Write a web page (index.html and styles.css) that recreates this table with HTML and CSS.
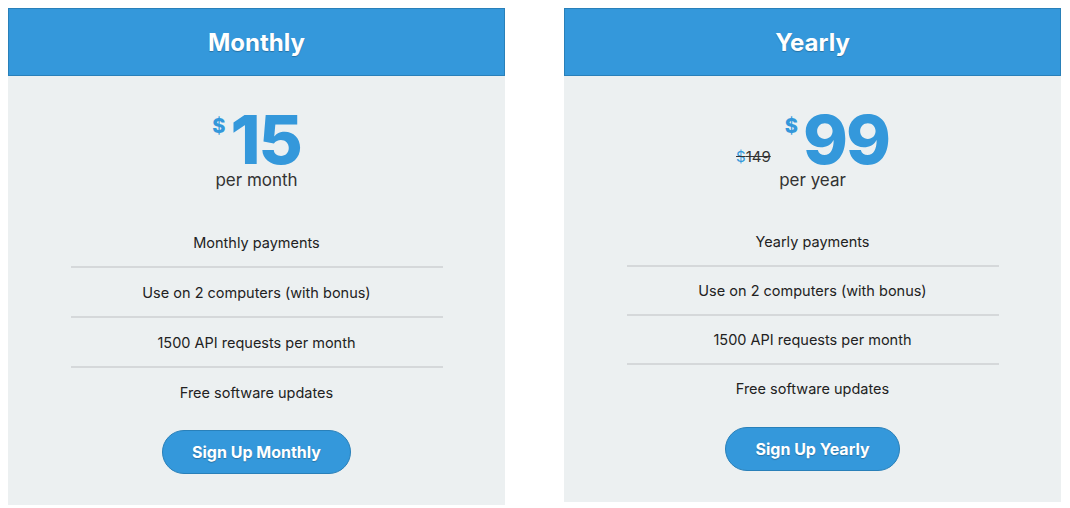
FILE: index.html
```html
<!DOCTYPE html>
<html>
<head>
<meta charset="utf-8">
<link rel="stylesheet" href="styles.css">
</head>
<body>
<div class="plans">
  <div class="card card-monthly">
    <div class="card-head">Monthly</div>
    <div class="card-body">
      <div class="price">
        <span class="cur">$</span><span class="amount">15</span>
      </div>
      <div class="period">per month</div>
      <ul class="features">
        <li>Monthly payments</li>
        <li>Use on 2 computers (with bonus)</li>
        <li>1500 API requests per month</li>
        <li>Free software updates</li>
      </ul>
      <a class="btn" href="#">Sign Up Monthly</a>
    </div>
  </div>
  <div class="card card-yearly">
    <div class="card-head">Yearly</div>
    <div class="card-body">
      <div class="price">
        <span class="old"><span class="old-cur">$</span>149</span><span class="cur">$</span><span class="amount">99</span>
      </div>
      <div class="period">per year</div>
      <ul class="features">
        <li>Yearly payments</li>
        <li>Use on 2 computers (with bonus)</li>
        <li>1500 API requests per month</li>
        <li>Free software updates</li>
      </ul>
      <a class="btn" href="#">Sign Up Yearly</a>
    </div>
  </div>
</div>
</body>
</html>
```

FILE: styles.css
```css
body {
  margin: 8px;
  background: #ffffff;
  font-family: "Inter", "Noto Sans", sans-serif;
  color: #333;
}
.plans {
  display: flex;
  align-items: flex-start;
  gap: 59px;
}
.card {
  width: 497px;
  background: #ecf0f1;
}
.card-head {
  height: 66px;
  background: #3498db;
  border: 1px solid #2980b9;
  color: #fff;
  font-size: 24px;
  font-weight: 700;
  display: flex;
  align-items: center;
  justify-content: center;
  text-shadow: 0 1px 1px rgba(0,0,0,0.25);
}
.card-body {
  display: flex;
  flex-direction: column;
  align-items: center;
  padding: 30px 0 31px;
}
.price {
  display: flex;
  align-items: flex-start;
  height: 64px;
  color: #3498db;
  font-weight: 800;
}
.cur {
  font-size: 20px;
  line-height: 1;
  margin-top: 10px;
  margin-right: 5px;
}
.amount {
  font-size: 68px;
  line-height: 66px;
  letter-spacing: -2px;
}
.old {
  align-self: flex-end;
  font-size: 15px;
  font-weight: 400;
  color: #333;
  text-decoration: line-through;
  margin-right: 14px;
  margin-bottom: 4px;
}
.old-cur {
  color: #3498db;
}
.period {
  font-size: 17px;
  line-height: 20px;
  color: #333;
}
.features {
  list-style: none;
  margin: 28px 0 0;
  padding: 0;
  width: 372px;
}
.features li {
  height: 48px;
  display: flex;
  align-items: center;
  justify-content: center;
  font-size: 14.5px;
  color: #222;
  border-bottom: 2px solid #d5d8da;
}
.features li:last-child {
  border-bottom: none;
}
.btn {
  margin-top: 14px;
  display: inline-block;
  padding: 0 29px;
  height: 42px;
  line-height: 42px;
  border-radius: 24px;
  background: #3498db;
  border: 1px solid #2980b9;
  color: #fff;
  font-size: 16px;
  font-weight: 700;
  text-decoration: none;
  text-shadow: 0 1px 1px rgba(0,0,0,0.25);
}
.card-yearly .features li {
  height: 47px;
}
.card-yearly .btn {
  margin-top: 15px;
}
```
